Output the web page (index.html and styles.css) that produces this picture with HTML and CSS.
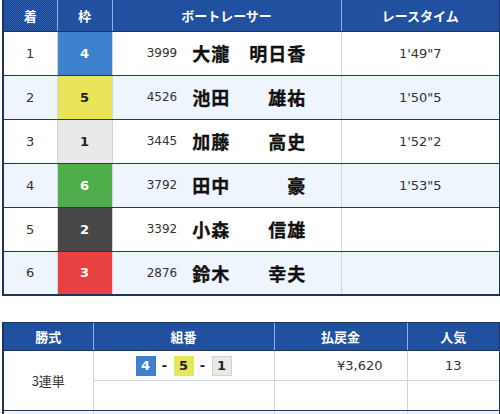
FILE: index.html
```html
<!DOCTYPE html>
<html lang="ja">
<head>
<meta charset="utf-8">
<link rel="stylesheet" href="styles.css">
</head>
<body>
<div class="page">
  <table class="result">
    <colgroup>
      <col class="c-rank"><col class="c-waku"><col class="c-racer"><col class="c-time">
    </colgroup>
    <thead>
      <tr><th>着</th><th>枠</th><th>ボートレーサー</th><th>レースタイム</th></tr>
    </thead>
    <tbody>
      <tr><td class="rank">1</td><td class="waku w4">4</td><td class="racer"><span class="no">3999</span><span class="name">大瀧　明日香</span></td><td class="time">1'49"7</td></tr>
      <tr class="alt"><td class="rank">2</td><td class="waku w5">5</td><td class="racer"><span class="no">4526</span><span class="name">池田　　雄祐</span></td><td class="time">1'50"5</td></tr>
      <tr><td class="rank">3</td><td class="waku w1">1</td><td class="racer"><span class="no">3445</span><span class="name">加藤　　高史</span></td><td class="time">1'52"2</td></tr>
      <tr class="alt"><td class="rank">4</td><td class="waku w6">6</td><td class="racer"><span class="no">3792</span><span class="name">田中　　　豪</span></td><td class="time">1'53"5</td></tr>
      <tr><td class="rank">5</td><td class="waku w2">2</td><td class="racer"><span class="no">3392</span><span class="name">小森　　信雄</span></td><td class="time"></td></tr>
      <tr class="alt"><td class="rank">6</td><td class="waku w3">3</td><td class="racer"><span class="no">2876</span><span class="name">鈴木　　幸夫</span></td><td class="time"></td></tr>
    </tbody>
  </table>

  <table class="payout">
    <colgroup>
      <col class="p-type"><col class="p-combo"><col class="p-pay"><col class="p-pop">
    </colgroup>
    <thead>
      <tr><th>勝式</th><th>組番</th><th>払戻金</th><th>人気</th></tr>
    </thead>
    <tbody class="group">
      <tr class="sub"><td rowspan="2" class="type">3連単</td><td class="combo"><span class="box w4">4</span><span class="dash">-</span><span class="box w5">5</span><span class="dash">-</span><span class="box w1">1</span></td><td class="pay">¥3,620</td><td class="pop">13</td></tr>
      <tr class="sub"><td class="combo"></td><td class="pay"></td><td class="pop"></td></tr>
    </tbody>
    <tbody class="group alt">
      <tr class="sub"><td rowspan="2" class="type"></td><td class="combo"></td><td class="pay"></td><td class="pop"></td></tr>
      <tr class="sub"><td class="combo"></td><td class="pay"></td><td class="pop"></td></tr>
    </tbody>
  </table>
</div>
</body>
</html>
```

FILE: styles.css
```css
html, body {
  margin: 0;
  padding: 0;
  background: #ffffff;
}

.page {
  padding: 0 2px;
  font-family: "DejaVu Sans", "Noto Sans CJK JP", sans-serif;
  color: #222;
}

table {
  border-collapse: collapse;
  table-layout: fixed;
  width: 497px;
}

th {
  color: #ffffff;
  font-family: "Noto Sans CJK JP", sans-serif;
  font-weight: 700;
  font-size: 13px;
  text-align: center;
  background-color: #214f9f;
  background-image: repeating-conic-gradient(#1a4592 0 25%, #2b5cae 0 50%);
  background-size: 2px 2px;
  border-left: 1px solid #8fb0e0;
  border-bottom: 1px solid #1b3658;
  padding: 0;
}

th:first-child { border-left: 2px solid #1b3658; }
th:last-child { border-right: 2px solid #1b3658; }

/* result table */
.c-rank { width: 54px; }
.c-waku { width: 55px; }
.c-racer { width: 229px; }
.c-time { width: 159px; }

.result thead tr { height: 31px; }
.result tbody tr {
  height: 44px;
  background: #ffffff;
}
.result tbody tr.alt { background: #eff5fc; }

.result td {
  padding: 0;
  text-align: center;
  border-bottom: 1px solid #1e3a5c;
  border-left: 1px solid #cfd6de;
  font-size: 13px;
}
.result td:first-child { border-left: 2px solid #1b3658; }
.result td:last-child { border-right: 2px solid #1b3658; }
.result tbody tr:last-child td { border-bottom: 2px solid #1b3658; }

.rank { color: #333; }

.waku {
  font-weight: 700;
  font-size: 14px;
}

.w1 { background: #e9e9e9; color: #222; }
.w2 { background: #474747; color: #ffffff; }
.w3 { background: #e94141; color: #ffffff; }
.w4 { background: #3d80cc; color: #ffffff; }
.w5 { background: #e9e55a; color: #222; }
.w6 { background: #4eae4c; color: #ffffff; }

.racer { white-space: nowrap; }
.racer .no {
  font-size: 12px;
  color: #333;
  display: inline-block;
  margin-right: 15px;
  vertical-align: middle;
}
.racer .name {
  font-family: "Noto Sans CJK JP", sans-serif;
  font-weight: 700;
  font-size: 18px;
  letter-spacing: 1px;
  color: #111;
  vertical-align: middle;
  -webkit-text-stroke: 0.3px #111;
}

.time {
  font-size: 12px;
  color: #333;
}

/* payout table */
.payout { margin-top: 26px; }
.p-type { width: 90px; }
.p-combo { width: 181px; }
.p-pay { width: 133px; }
.p-pop { width: 93px; }

.payout thead tr { height: 28px; }
.payout th { border-top: 1px solid #1b3658; }

.payout tr.sub { height: 30px; }
.payout td {
  padding: 0;
  border-left: 1px solid #cfd6de;
  border-bottom: 1px solid #cfd6de;
  text-align: center;
  font-size: 13px;
  color: #333;
}
.payout td.type {
  border-left: 2px solid #1b3658;
  font-family: "Noto Sans CJK JP", sans-serif;
}
.payout td.pop { border-right: 2px solid #1b3658; }
.payout tbody.group tr:last-child td,
.payout tbody.group td.type { border-bottom: 1px solid #1e3a5c; }
.payout tbody.alt { background: #eff5fc; }

.pay {
  text-align: right !important;
  padding-right: 24px !important;
}

.combo { white-space: nowrap; }
.box {
  display: inline-block;
  width: 20px;
  height: 20px;
  line-height: 20px;
  font-size: 13px;
  font-weight: 700;
  text-align: center;
  vertical-align: middle;
}
.box.w1 { box-shadow: inset 0 0 0 1px #d4d4d4; }
.dash {
  display: inline-block;
  width: 18px;
  font-weight: 700;
  font-size: 13px;
  color: #111;
  vertical-align: middle;
}
```
